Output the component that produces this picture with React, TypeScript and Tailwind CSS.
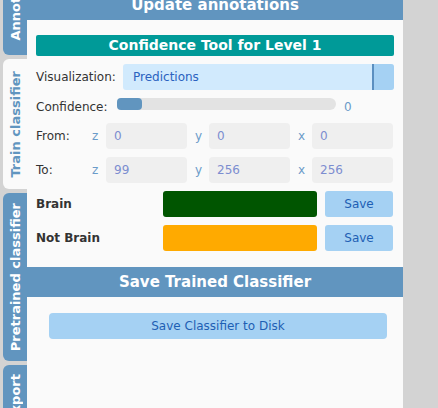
const font = { fontFamily: '"DejaVu Sans", sans-serif' }

function Tab({ label, active, className }: { label: string; active?: boolean; className: string }) {
  return (
    <div
      className={`flex flex-col items-center overflow-hidden rounded-l-[6px] ${
        active ? 'bg-[#fafafa] text-[#6195bf]' : 'bg-[#6195bf] text-white'
      } ${className}`}
    >
      <span className="[writing-mode:vertical-rl] rotate-180 whitespace-nowrap text-[13px] font-bold leading-none">
        {label}
      </span>
    </div>
  )
}

function CoordInput({ axis, value }: { axis: string; value: string }) {
  return (
    <div className="flex items-center">
      <span className="w-[14px] text-[12px] text-[#6b9bc9]">{axis}</span>
      <div className="flex h-[26px] w-[81px] items-center rounded-[4px] bg-[#efefef] pl-[8px] text-[12px] text-[#7c8dd0]">
        {value}
      </div>
    </div>
  )
}

function ColorRow({ label, color }: { label: string; color: string }) {
  return (
    <div className="mt-[8px] flex h-[26px] items-center">
      <span className="w-[127px] text-[12px] font-bold text-[#333]">{label}</span>
      <div className={`h-[26px] w-[154px] rounded-[3px] ${color}`} />
      <button className="ml-[8px] h-[26px] w-[68px] rounded-[3px] bg-[#a5d1f3] text-[12px] text-[#1e5fb4]">
        Save
      </button>
    </div>
  )
}

export default function App() {
  return (
    <div className="h-[408px] w-[438px] overflow-hidden bg-[#d3d3d3]" style={font}>
      <div className="-mt-[10px] flex">
        {/* side tabs */}
        <div className="flex w-[27px] flex-col gap-[4px] pl-[3px]">
          <Tab label="Annotate" className="h-[65px] justify-end pb-[14px]" />
          <Tab label="Train classifier" active className="h-[130px] justify-center" />
          <Tab label="Pretrained classifier" className="h-[168px] justify-center" />
          <Tab label="Export" className="h-[80px] justify-start pt-[9px]" />
        </div>

        {/* panel */}
        <div className="flex h-[418px] w-[376px] flex-col bg-[#fafafa]">
          <div className="flex h-[30px] items-center justify-center bg-[#6195bf] text-[15px] font-bold text-white">
            Update annotations
          </div>

          <div className="px-[9px] pb-[16px] pt-[15px]">
            <div className="flex h-[21px] items-center justify-center rounded-[2px] bg-[#009a98] text-[14px] font-bold text-white">
              Confidence Tool for Level 1
            </div>

            <div className="mt-[8px] flex h-[26px] items-center">
              <span className="w-[87px] text-[12px] text-[#333]">Visualization:</span>
              <div className="flex h-[26px] flex-1 overflow-hidden rounded-[3px] bg-[#d1eafd]">
                <span className="flex flex-1 items-center pl-[10px] text-[12px] text-[#2a62c0]">Predictions</span>
                <span className="w-[22px] border-l-2 border-[#5b8fc0] bg-[#a5d1f3]" />
              </div>
            </div>

            <div className="mt-[8px] flex h-[17px] items-center">
              <span className="w-[81px] text-[12px] text-[#333]">Confidence:</span>
              <div className="h-[12px] w-[219px] self-start rounded-[6px] bg-[#e3e3e3]">
                <div className="h-[12px] w-[25px] rounded-[4px] bg-[#6195bf]" />
              </div>
              <span className="ml-[8px] text-[12px] text-[#6b9bc9]">0</span>
            </div>

            <div className="mt-[8px] flex h-[26px] items-center">
              <span className="w-[56px] text-[12px] text-[#333]">From:</span>
              <div className="flex gap-[8px]">
                <CoordInput axis="z" value="0" />
                <CoordInput axis="y" value="0" />
                <CoordInput axis="x" value="0" />
              </div>
            </div>

            <div className="mt-[8px] flex h-[26px] items-center">
              <span className="w-[56px] text-[12px] text-[#333]">To:</span>
              <div className="flex gap-[8px]">
                <CoordInput axis="z" value="99" />
                <CoordInput axis="y" value="256" />
                <CoordInput axis="x" value="256" />
              </div>
            </div>

            <ColorRow label="Brain" color="bg-[#005500]" />
            <ColorRow label="Not Brain" color="bg-[#ffaa00]" />
          </div>

          <div className="flex h-[30px] items-center justify-center bg-[#6195bf] text-[15px] font-bold text-white">
            Save Trained Classifier
          </div>

          <div className="ml-[22px] mr-[16px] mt-[16px]">
            <button className="h-[26px] w-full rounded-[4px] bg-[#a5d1f3] text-[12px] text-[#1e5fb4]">
              Save Classifier to Disk
            </button>
          </div>
        </div>
      </div>
    </div>
  )
}
